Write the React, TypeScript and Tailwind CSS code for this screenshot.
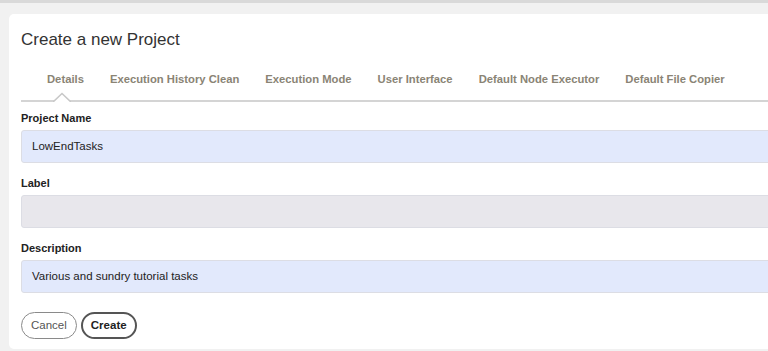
import React from "react";

const tabs = [
  "Details",
  "Execution History Clean",
  "Execution Mode",
  "User Interface",
  "Default Node Executor",
  "Default File Copier",
];

function Field({ label, value, bg }: { label: string; value: string; bg: string }) {
  return (
    <div className="flex flex-col">
      <div className="text-[11px] font-bold text-[#222] leading-[14px] h-[14px]">{label}</div>
      <div
        className={`mt-[5px] h-[33px] rounded-[3px] border border-[#dcdde4] flex items-center pl-[10px] pt-[1px] text-[11.5px] text-[#222] ${bg}`}
      >
        {value}
      </div>
    </div>
  );
}

export default function App() {
  return (
    <div
      className="w-[768px] h-[351px] overflow-hidden bg-[#f1f1f1] border-t-[3px] border-[#d9d9d9]"
      style={{ fontFamily: '"Liberation Sans", Arial, sans-serif' }}
    >
      <div className="ml-[9px] mt-[11px] w-[800px] h-[335px] bg-white rounded-[5px] pl-[12px] pt-[15px]">
        <div className="text-[17px] text-[#333] leading-[22px] h-[22px]">Create a new Project</div>
        <div className="mt-[21px] relative border-b-2 border-[#d4d4d4] h-[30px]">
          <div className="flex pl-[13px]">
            {tabs.map((t) => (
              <div key={t} className="px-[13px] text-[11.25px] font-bold text-[#8a8475] leading-[14px]">
                {t}
              </div>
            ))}
          </div>
          <svg
            className="absolute left-[32px] top-[20px]"
            width="18"
            height="10"
            viewBox="0 0 18 10"
          >
            <path d="M0 10 L9 1.5 L18 10" fill="white" stroke="#c8c8c8" strokeWidth="1.6" />
          </svg>
        </div>
        <div className="mt-[9px] flex flex-col gap-[13px]">
          <Field label="Project Name" value="LowEndTasks" bg="bg-[#e2e9fc]" />
          <Field label="Label" value="" bg="bg-[#e8e7ec]" />
          <Field label="Description" value="Various and sundry tutorial tasks" bg="bg-[#e2e9fc]" />
        </div>
        <div className="mt-[19px] flex gap-[4px]">
          <button className="h-[27px] px-[9px] rounded-full border border-[#8a8a8a] text-[11.5px] text-[#555] bg-white">
            Cancel
          </button>
          <button className="h-[27px] px-[8px] rounded-full border-2 border-[#555] text-[11.5px] font-bold text-[#222] bg-white">
            Create
          </button>
        </div>
      </div>
    </div>
  );
}
